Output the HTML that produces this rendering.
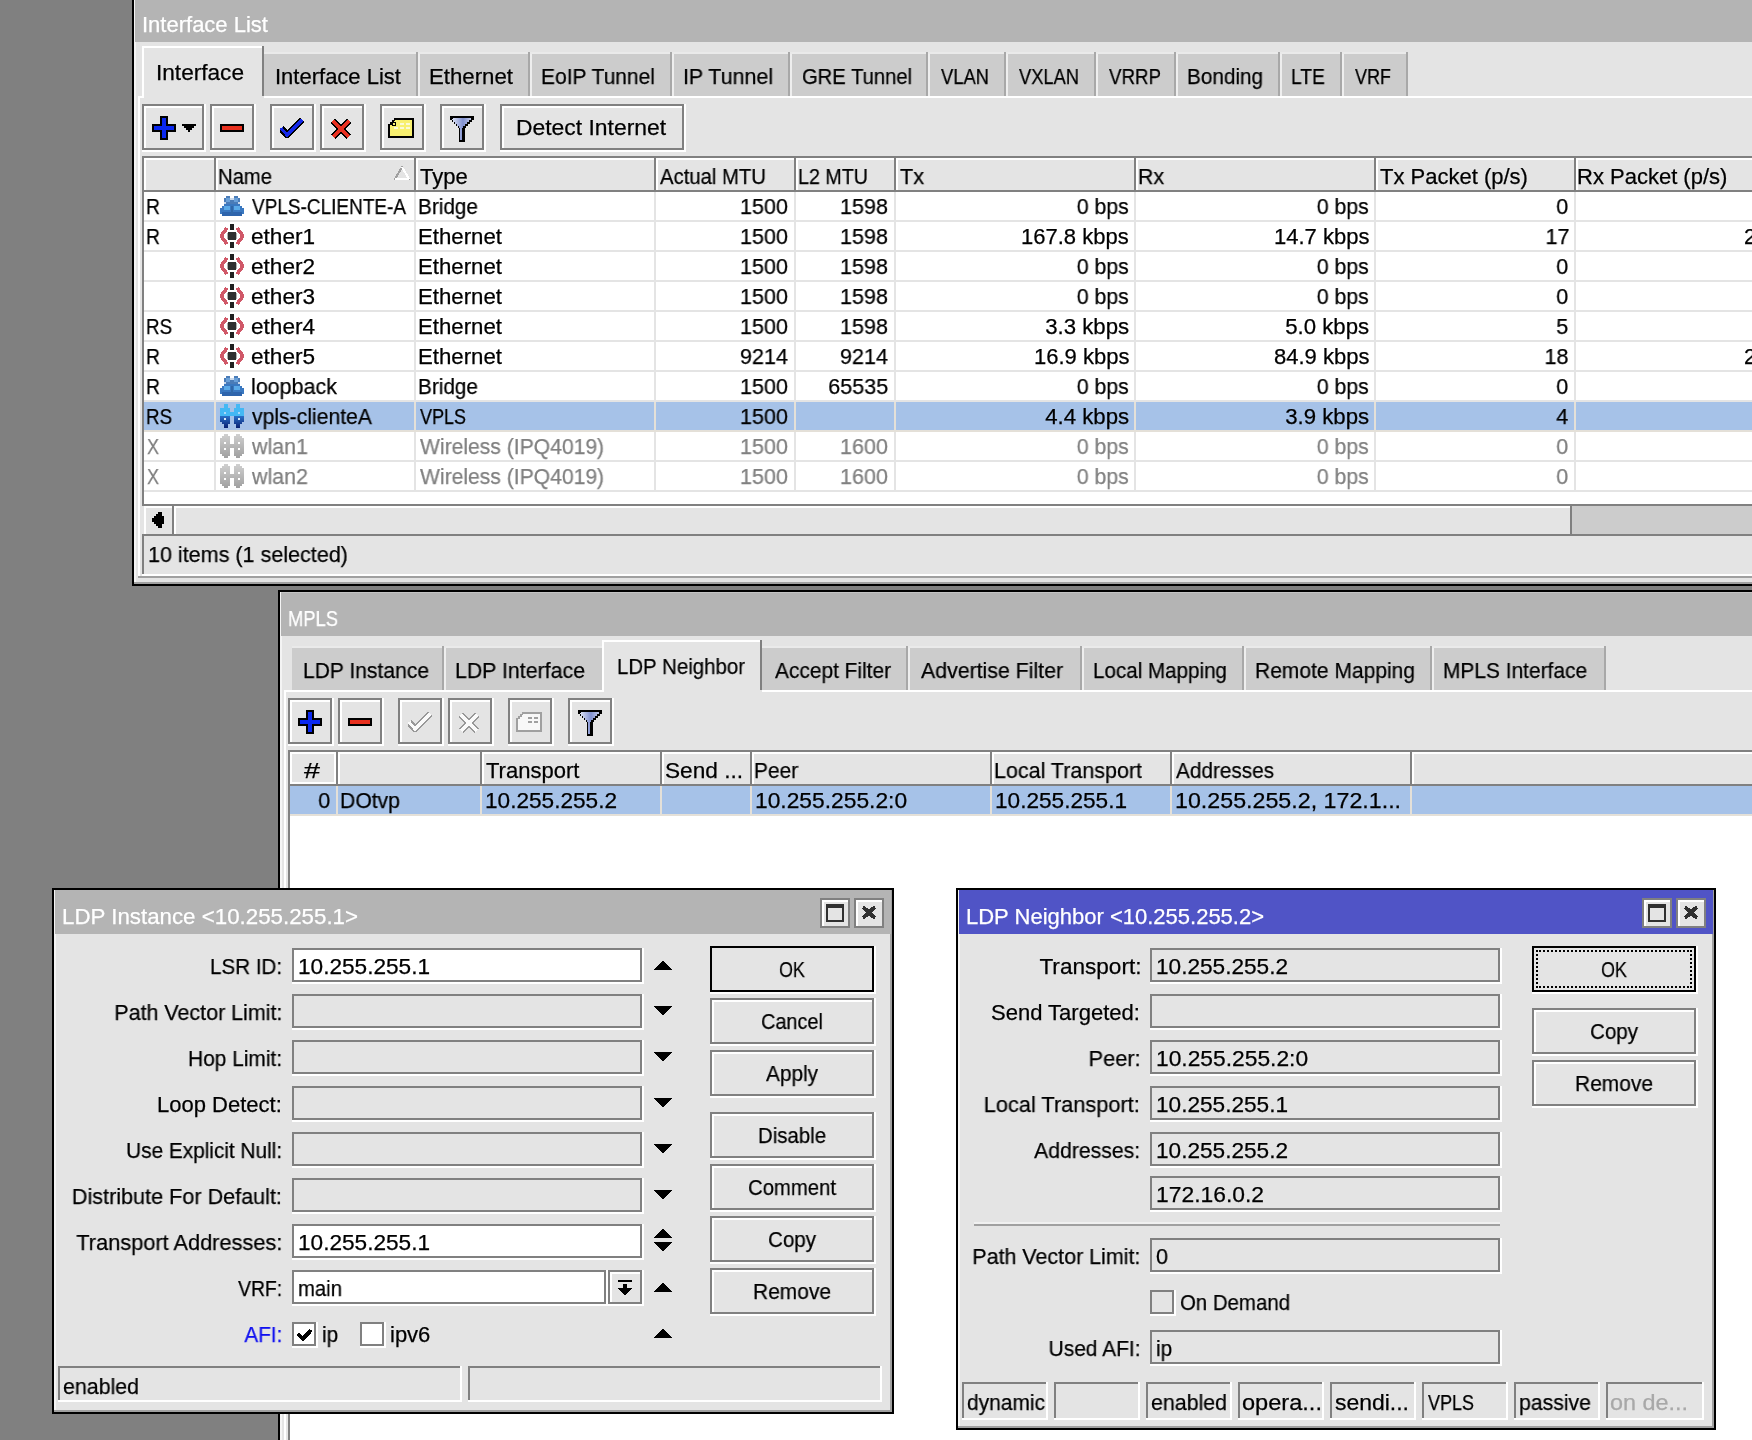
<!DOCTYPE html><html><head><meta charset="utf-8"><style>html,body{margin:0;padding:0;}body{width:1752px;height:1440px;overflow:hidden;position:relative;background:#808080;font-family:"Liberation Sans",sans-serif;font-size:22px;}div,span,svg{position:absolute;box-sizing:content-box;}.t{white-space:nowrap;line-height:24px;font-size:22px;will-change:transform;-webkit-text-stroke:0.25px currentColor;}</style></head><body>
<div style="left:132px;top:-10px;width:1630px;height:596px;background:#000;"></div>
<div style="left:134px;top:-10px;width:1752px;height:594px;background:#f4f4f4;"></div>
<div style="left:134px;top:582px;width:1752px;height:2px;background:#a0a0a0;"></div>
<div style="left:136px;top:-10px;width:1752px;height:592px;background:#e4e4e4;"></div>
<div style="left:135px;top:0px;width:1752px;height:42px;background:#b4b4b4;"></div>
<span class="t" style="left:142.0px;top:13px;color:#fff;transform-origin:0 0;">Interface List</span>
<div style="left:138px;top:96px;width:2px;height:482px;background:#fff;"></div>
<div style="left:138px;top:576px;width:1752px;height:2px;background:#a0a0a0;"></div>
<div style="left:140px;top:96px;width:1752px;height:2px;background:#fff;"></div>
<div style="left:142px;top:46px;width:122px;height:52px;background:#e4e4e4;"></div>
<div style="left:142px;top:46px;width:120px;height:2px;background:#fff;"></div>
<div style="left:142px;top:46px;width:2px;height:52px;background:#fff;"></div>
<div style="left:262px;top:46px;width:2px;height:50px;background:#808080;"></div>
<span class="t" style="left:155.9px;top:61px;color:#000;transform:scaleX(1.028);transform-origin:0 0;">Interface</span>
<div style="left:264px;top:52px;width:154px;height:2px;background:#eaeaea;"></div>
<div style="left:264px;top:54px;width:154px;height:42px;background:#cccccc;"></div>
<div style="left:416px;top:52px;width:2px;height:44px;background:#a8a8a8;"></div>
<span class="t" style="left:274.5px;top:65px;color:#000;transform-origin:0 0;">Interface List</span>
<div style="left:418px;top:52px;width:112px;height:2px;background:#eaeaea;"></div>
<div style="left:418px;top:54px;width:112px;height:42px;background:#cccccc;"></div>
<div style="left:528px;top:52px;width:2px;height:44px;background:#a8a8a8;"></div>
<div style="left:418px;top:54px;width:2px;height:42px;background:#eeeeee;"></div>
<span class="t" style="left:428.5px;top:65px;color:#000;transform:scaleX(1.010);transform-origin:0 0;">Ethernet</span>
<div style="left:530px;top:52px;width:142px;height:2px;background:#eaeaea;"></div>
<div style="left:530px;top:54px;width:142px;height:42px;background:#cccccc;"></div>
<div style="left:670px;top:52px;width:2px;height:44px;background:#a8a8a8;"></div>
<div style="left:530px;top:54px;width:2px;height:42px;background:#eeeeee;"></div>
<span class="t" style="left:540.6px;top:65px;color:#000;transform:scaleX(0.954);transform-origin:0 0;">EoIP Tunnel</span>
<div style="left:672px;top:52px;width:118px;height:2px;background:#eaeaea;"></div>
<div style="left:672px;top:54px;width:118px;height:42px;background:#cccccc;"></div>
<div style="left:788px;top:52px;width:2px;height:44px;background:#a8a8a8;"></div>
<div style="left:672px;top:54px;width:2px;height:42px;background:#eeeeee;"></div>
<span class="t" style="left:682.6px;top:65px;color:#000;transform:scaleX(0.972);transform-origin:0 0;">IP Tunnel</span>
<div style="left:790px;top:52px;width:138px;height:2px;background:#eaeaea;"></div>
<div style="left:790px;top:54px;width:138px;height:42px;background:#cccccc;"></div>
<div style="left:926px;top:52px;width:2px;height:44px;background:#a8a8a8;"></div>
<div style="left:790px;top:54px;width:2px;height:42px;background:#eeeeee;"></div>
<span class="t" style="left:801.6px;top:65px;color:#000;transform:scaleX(0.918);transform-origin:0 0;">GRE Tunnel</span>
<div style="left:928px;top:52px;width:78px;height:2px;background:#eaeaea;"></div>
<div style="left:928px;top:54px;width:78px;height:42px;background:#cccccc;"></div>
<div style="left:1004px;top:52px;width:2px;height:44px;background:#a8a8a8;"></div>
<div style="left:928px;top:54px;width:2px;height:42px;background:#eeeeee;"></div>
<span class="t" style="left:940.5px;top:65px;color:#000;transform:scaleX(0.835);transform-origin:0 0;">VLAN</span>
<div style="left:1006px;top:52px;width:90px;height:2px;background:#eaeaea;"></div>
<div style="left:1006px;top:54px;width:90px;height:42px;background:#cccccc;"></div>
<div style="left:1094px;top:52px;width:2px;height:44px;background:#a8a8a8;"></div>
<div style="left:1006px;top:54px;width:2px;height:42px;background:#eeeeee;"></div>
<span class="t" style="left:1018.5px;top:65px;color:#000;transform:scaleX(0.832);transform-origin:0 0;">VXLAN</span>
<div style="left:1096px;top:52px;width:80px;height:2px;background:#eaeaea;"></div>
<div style="left:1096px;top:54px;width:80px;height:42px;background:#cccccc;"></div>
<div style="left:1174px;top:52px;width:2px;height:44px;background:#a8a8a8;"></div>
<div style="left:1096px;top:54px;width:2px;height:42px;background:#eeeeee;"></div>
<span class="t" style="left:1108.5px;top:65px;color:#000;transform:scaleX(0.851);transform-origin:0 0;">VRRP</span>
<div style="left:1176px;top:52px;width:104px;height:2px;background:#eaeaea;"></div>
<div style="left:1176px;top:54px;width:104px;height:42px;background:#cccccc;"></div>
<div style="left:1278px;top:52px;width:2px;height:44px;background:#a8a8a8;"></div>
<div style="left:1176px;top:54px;width:2px;height:42px;background:#eeeeee;"></div>
<span class="t" style="left:1186.6px;top:65px;color:#000;transform:scaleX(0.941);transform-origin:0 0;">Bonding</span>
<div style="left:1280px;top:52px;width:62px;height:2px;background:#eaeaea;"></div>
<div style="left:1280px;top:54px;width:62px;height:42px;background:#cccccc;"></div>
<div style="left:1340px;top:52px;width:2px;height:44px;background:#a8a8a8;"></div>
<div style="left:1280px;top:54px;width:2px;height:42px;background:#eeeeee;"></div>
<span class="t" style="left:1290.7px;top:65px;color:#000;transform:scaleX(0.878);transform-origin:0 0;">LTE</span>
<div style="left:1342px;top:52px;width:66px;height:2px;background:#eaeaea;"></div>
<div style="left:1342px;top:54px;width:66px;height:42px;background:#cccccc;"></div>
<div style="left:1406px;top:52px;width:2px;height:44px;background:#a8a8a8;"></div>
<div style="left:1342px;top:54px;width:2px;height:42px;background:#eeeeee;"></div>
<span class="t" style="left:1354.5px;top:65px;color:#000;transform:scaleX(0.818);transform-origin:0 0;">VRF</span>
<div style="left:142px;top:104px;width:58px;height:42px;border:2px solid #808080;background:#e4e4e4;box-shadow:0 2px 0 0 #fff,2px 0 0 0 #fff,2px 2px 0 0 #fff, inset 2px 2px 0 0 #fff;"></div>
<svg style="position:absolute;left:152px;top:116px" width="24" height="24" viewBox="0 0 24 24" shape-rendering="crispEdges"><path d="M8 0h8v8h8v8h-8v8h-8v-8h-8v-8h8z" fill="#000"/><path d="M10 2h4v8h8v4h-8v8h-4v-8h-8v-4h8z" fill="#0a28f0"/></svg>
<svg style="position:absolute;left:182px;top:124px" width="14" height="8" viewBox="0 0 14 8" shape-rendering="crispEdges"><path d="M0 0h14v2h-2v2h-2v2h-2v2h-2v-2h-2v-2h-2v-2h-2z" fill="#000"/></svg>
<div style="left:210px;top:104px;width:40px;height:42px;border:2px solid #808080;background:#e4e4e4;box-shadow:0 2px 0 0 #fff,2px 0 0 0 #fff,2px 2px 0 0 #fff, inset 2px 2px 0 0 #fff;"></div>
<svg style="position:absolute;left:220px;top:124px" width="24" height="8" viewBox="0 0 24 8" shape-rendering="crispEdges"><rect width="24" height="8" fill="#000"/><rect x="2" y="2" width="20" height="4" fill="#e8301e"/></svg>
<div style="left:270px;top:104px;width:40px;height:42px;border:2px solid #808080;background:#e4e4e4;box-shadow:0 2px 0 0 #fff,2px 0 0 0 #fff,2px 2px 0 0 #fff, inset 2px 2px 0 0 #fff;"></div>
<svg style="position:absolute;left:280px;top:118px" width="24" height="20" viewBox="0 0 24 20" shape-rendering="crispEdges"><path d="M1 10 L7 17 L22 2" fill="none" stroke="#000" stroke-width="7" stroke-linejoin="miter"/><path d="M1 10 L7 17 L22 2" fill="none" stroke="#1428e8" stroke-width="3" stroke-linejoin="miter"/></svg>
<div style="left:320px;top:104px;width:40px;height:42px;border:2px solid #808080;background:#e4e4e4;box-shadow:0 2px 0 0 #fff,2px 0 0 0 #fff,2px 2px 0 0 #fff, inset 2px 2px 0 0 #fff;"></div>
<svg style="position:absolute;left:330px;top:118px" width="22" height="22" viewBox="0 0 22 22" shape-rendering="crispEdges"><path d="M3 3L19 19M19 3L3 19" fill="none" stroke="#000" stroke-width="7"/><path d="M3 3L19 19M19 3L3 19" fill="none" stroke="#e83020" stroke-width="3"/></svg>
<div style="left:380px;top:104px;width:40px;height:42px;border:2px solid #808080;background:#e4e4e4;box-shadow:0 2px 0 0 #fff,2px 0 0 0 #fff,2px 2px 0 0 #fff, inset 2px 2px 0 0 #fff;"></div>
<svg style="position:absolute;left:388px;top:118px" width="26" height="20" viewBox="0 0 26 20" shape-rendering="crispEdges"><path d="M6 0h20v20h-26v-14h2v-2h2v-2h2z" fill="#000"/><path d="M7 2h17v16h-22v-11h2v-2h2v-2h1z" fill="#f8f070"/><rect x="4" y="4" width="4" height="4" fill="#000"/><rect x="5" y="5" width="2" height="2" fill="#f8f070"/><path d="M12 6h4M18 6h4M6 10h4M12 10h4M18 10h4" stroke="#fafad8" stroke-width="2"/></svg>
<div style="left:440px;top:104px;width:40px;height:42px;border:2px solid #808080;background:#e4e4e4;box-shadow:0 2px 0 0 #fff,2px 0 0 0 #fff,2px 2px 0 0 #fff, inset 2px 2px 0 0 #fff;"></div>
<svg style="position:absolute;left:450px;top:116px" width="24" height="26" viewBox="0 0 24 26" shape-rendering="crispEdges"><defs><linearGradient id="flg" x1="0" y1="0" x2="1" y2="0"><stop offset="0" stop-color="#e8ecf8"/><stop offset=".6" stop-color="#8090d0"/><stop offset="1" stop-color="#c0c8e8"/></linearGradient></defs><path d="M0 0h24v4h-2v2h-2v2h-2v2h-2v2h-1v14h-6v-14h-1v-2h-2v-2h-2v-2h-2v-2h-2z" fill="#000"/><path d="M3 2h18v2h-2v2h-2v2h-2v2h-2v2h-1v12h-2v-12h-1v-2h-2v-2h-2v-2h-2v-2h-2z" fill="url(#flg)"/></svg>
<div style="left:500px;top:104px;width:180px;height:42px;border:2px solid #808080;background:#e4e4e4;box-shadow:0 2px 0 0 #fff,2px 0 0 0 #fff,2px 2px 0 0 #fff, inset 2px 2px 0 0 #fff;"></div>
<span class="t" style="left:516.1px;top:116px;color:#000;transform:scaleX(1.040);transform-origin:0 0;">Detect Internet</span>
<div style="left:142px;top:156px;width:1752px;height:350px;background:#808080;"></div>
<div style="left:144px;top:158px;width:1752px;height:346px;background:#fff;"></div>
<div style="left:144px;top:158px;width:1752px;height:32px;background:#e4e4e4;"></div>
<div style="left:144px;top:190px;width:1752px;height:2px;background:#808080;"></div>
<div style="left:144px;top:158px;width:2000px;height:2px;background:#fff;"></div>
<div style="left:144px;top:158px;width:2px;height:32px;background:#fff;"></div>
<div style="left:216px;top:158px;width:2000px;height:2px;background:#fff;"></div>
<div style="left:216px;top:158px;width:2px;height:32px;background:#fff;"></div>
<div style="left:416px;top:158px;width:2000px;height:2px;background:#fff;"></div>
<div style="left:416px;top:158px;width:2px;height:32px;background:#fff;"></div>
<div style="left:656px;top:158px;width:2000px;height:2px;background:#fff;"></div>
<div style="left:656px;top:158px;width:2px;height:32px;background:#fff;"></div>
<div style="left:796px;top:158px;width:2000px;height:2px;background:#fff;"></div>
<div style="left:796px;top:158px;width:2px;height:32px;background:#fff;"></div>
<div style="left:896px;top:158px;width:2000px;height:2px;background:#fff;"></div>
<div style="left:896px;top:158px;width:2px;height:32px;background:#fff;"></div>
<div style="left:1136px;top:158px;width:2000px;height:2px;background:#fff;"></div>
<div style="left:1136px;top:158px;width:2px;height:32px;background:#fff;"></div>
<div style="left:1376px;top:158px;width:2000px;height:2px;background:#fff;"></div>
<div style="left:1376px;top:158px;width:2px;height:32px;background:#fff;"></div>
<div style="left:1576px;top:158px;width:2000px;height:2px;background:#fff;"></div>
<div style="left:1576px;top:158px;width:2px;height:32px;background:#fff;"></div>
<div style="left:214px;top:158px;width:2px;height:32px;background:#808080;"></div>
<div style="left:414px;top:158px;width:2px;height:32px;background:#808080;"></div>
<div style="left:654px;top:158px;width:2px;height:32px;background:#808080;"></div>
<div style="left:794px;top:158px;width:2px;height:32px;background:#808080;"></div>
<div style="left:894px;top:158px;width:2px;height:32px;background:#808080;"></div>
<div style="left:1134px;top:158px;width:2px;height:32px;background:#808080;"></div>
<div style="left:1374px;top:158px;width:2px;height:32px;background:#808080;"></div>
<div style="left:1574px;top:158px;width:2px;height:32px;background:#808080;"></div>
<span class="t" style="left:218.2px;top:165px;color:#000;transform:scaleX(0.920);transform-origin:0 0;">Name</span>
<span class="t" style="left:420.0px;top:165px;color:#000;transform-origin:0 0;">Type</span>
<span class="t" style="left:660.0px;top:165px;color:#000;transform:scaleX(0.922);transform-origin:0 0;">Actual MTU</span>
<span class="t" style="left:798.2px;top:165px;color:#000;transform:scaleX(0.895);transform-origin:0 0;">L2 MTU</span>
<span class="t" style="left:900.0px;top:165px;color:#000;transform:scaleX(0.982);transform-origin:0 0;">Tx</span>
<span class="t" style="left:1138.1px;top:165px;color:#000;transform:scaleX(0.967);transform-origin:0 0;">Rx</span>
<span class="t" style="left:1380.0px;top:165px;color:#000;transform-origin:0 0;">Tx Packet (p/s)</span>
<span class="t" style="left:1577.0px;top:165px;color:#000;transform-origin:0 0;">Rx Packet (p/s)</span>
<svg style="position:absolute;left:394px;top:166px" width="16" height="14" viewBox="0 0 16 14" shape-rendering="crispEdges"><path d="M8 1L15 13H1z" fill="none" stroke="#a0a0a0" stroke-width="2"/><path d="M1 13H15M8 1L15 13" stroke="#fff" stroke-width="2"/></svg>
<div style="left:144px;top:220px;width:1752px;height:2px;background:#e4e4e4;"></div>
<div style="left:214px;top:192px;width:2px;height:30px;background:#e4e4e4;"></div>
<div style="left:414px;top:192px;width:2px;height:30px;background:#e4e4e4;"></div>
<div style="left:654px;top:192px;width:2px;height:30px;background:#e4e4e4;"></div>
<div style="left:794px;top:192px;width:2px;height:30px;background:#e4e4e4;"></div>
<div style="left:894px;top:192px;width:2px;height:30px;background:#e4e4e4;"></div>
<div style="left:1134px;top:192px;width:2px;height:30px;background:#e4e4e4;"></div>
<div style="left:1374px;top:192px;width:2px;height:30px;background:#e4e4e4;"></div>
<div style="left:1574px;top:192px;width:2px;height:30px;background:#e4e4e4;"></div>
<span class="t" style="left:146.2px;top:195px;color:#000;transform:scaleX(0.881);transform-origin:0 0;">R</span>
<svg style="position:absolute;left:220px;top:196px" width="24" height="20" viewBox="0 0 24 20" shape-rendering="crispEdges"><path d="M4 2h2v-2h4v2h4v-2h4v2h2v6h-16z" fill="#4a7cb8"/><rect x="6" y="2" width="4" height="4" fill="#6aa0d8"/><rect x="14" y="2" width="4" height="4" fill="#6aa0d8"/><rect x="10" y="2" width="4" height="2" fill="#c8d8ec"/><rect x="4" y="6" width="2" height="2" fill="#c8d8ec"/><rect x="18" y="6" width="2" height="2" fill="#c8d8ec"/><path d="M2 10h2v-2h16v2h2v2h2v6h-2v2h-20v-2h-2v-6h2z" fill="#3a78c0"/><rect x="4" y="10" width="6" height="4" fill="#5aaae8"/><rect x="14" y="10" width="6" height="4" fill="#5aaae8"/><rect x="2" y="16" width="20" height="4" fill="#2e64ac"/><rect x="11" y="10" width="2" height="8" fill="#3068a8"/></svg>
<span class="t" style="left:252.0px;top:195px;color:#000;transform:scaleX(0.863);transform-origin:0 0;">VPLS-CLIENTE-A</span>
<span class="t" style="left:418.1px;top:195px;color:#000;transform:scaleX(0.943);transform-origin:0 0;">Bridge</span>
<span class="t" style="right:964.1px;top:195px;color:#000;transform:scaleX(0.981);transform-origin:100% 0;">1500</span>
<span class="t" style="right:864.1px;top:195px;color:#000;transform:scaleX(0.981);transform-origin:100% 0;">1598</span>
<span class="t" style="right:623.2px;top:195px;color:#000;transform:scaleX(0.966);transform-origin:100% 0;">0 bps</span>
<span class="t" style="right:383.2px;top:195px;color:#000;transform:scaleX(0.966);transform-origin:100% 0;">0 bps</span>
<span class="t" style="right:183.8px;top:195px;color:#000;transform:scaleX(0.981);transform-origin:100% 0;">0</span>
<div style="left:144px;top:250px;width:1752px;height:2px;background:#e4e4e4;"></div>
<div style="left:214px;top:222px;width:2px;height:30px;background:#e4e4e4;"></div>
<div style="left:414px;top:222px;width:2px;height:30px;background:#e4e4e4;"></div>
<div style="left:654px;top:222px;width:2px;height:30px;background:#e4e4e4;"></div>
<div style="left:794px;top:222px;width:2px;height:30px;background:#e4e4e4;"></div>
<div style="left:894px;top:222px;width:2px;height:30px;background:#e4e4e4;"></div>
<div style="left:1134px;top:222px;width:2px;height:30px;background:#e4e4e4;"></div>
<div style="left:1374px;top:222px;width:2px;height:30px;background:#e4e4e4;"></div>
<div style="left:1574px;top:222px;width:2px;height:30px;background:#e4e4e4;"></div>
<span class="t" style="left:146.2px;top:225px;color:#000;transform:scaleX(0.881);transform-origin:0 0;">R</span>
<svg style="position:absolute;left:220px;top:224px" width="24" height="24" viewBox="0 0 24 24" shape-rendering="crispEdges"><rect x="10" y="0" width="4" height="6" fill="#202020"/><rect x="10" y="18" width="4" height="6" fill="#202020"/><rect x="8" y="8" width="8" height="8" fill="#303030"/><path d="M7 4l-6 8 6 8" fill="none" stroke="#d05868" stroke-width="3.5"/><path d="M17 4l6 8-6 8" fill="none" stroke="#d05868" stroke-width="3.5"/><rect x="7" y="9" width="1" height="6" fill="#b0b0b0"/><rect x="16" y="9" width="1" height="6" fill="#b0b0b0"/></svg>
<span class="t" style="left:251.0px;top:225px;color:#000;transform:scaleX(1.026);transform-origin:0 0;">ether1</span>
<span class="t" style="left:418.0px;top:225px;color:#000;transform:scaleX(1.010);transform-origin:0 0;">Ethernet</span>
<span class="t" style="right:964.1px;top:225px;color:#000;transform:scaleX(0.981);transform-origin:100% 0;">1500</span>
<span class="t" style="right:864.1px;top:225px;color:#000;transform:scaleX(0.981);transform-origin:100% 0;">1598</span>
<span class="t" style="right:623.4px;top:225px;color:#000;transform-origin:100% 0;">167.8 kbps</span>
<span class="t" style="right:382.6px;top:225px;color:#000;transform-origin:100% 0;">14.7 kbps</span>
<span class="t" style="right:182.6px;top:225px;color:#000;transform:scaleX(0.981);transform-origin:100% 0;">17</span>
<span class="t" style="left:1744.0px;top:225px;color:#000;transform:scaleX(0.981);transform-origin:0 0;">2</span>
<div style="left:144px;top:280px;width:1752px;height:2px;background:#e4e4e4;"></div>
<div style="left:214px;top:252px;width:2px;height:30px;background:#e4e4e4;"></div>
<div style="left:414px;top:252px;width:2px;height:30px;background:#e4e4e4;"></div>
<div style="left:654px;top:252px;width:2px;height:30px;background:#e4e4e4;"></div>
<div style="left:794px;top:252px;width:2px;height:30px;background:#e4e4e4;"></div>
<div style="left:894px;top:252px;width:2px;height:30px;background:#e4e4e4;"></div>
<div style="left:1134px;top:252px;width:2px;height:30px;background:#e4e4e4;"></div>
<div style="left:1374px;top:252px;width:2px;height:30px;background:#e4e4e4;"></div>
<div style="left:1574px;top:252px;width:2px;height:30px;background:#e4e4e4;"></div>
<span class="t" style="left:148.0px;top:255px;color:#000;transform-origin:0 0;"></span>
<svg style="position:absolute;left:220px;top:254px" width="24" height="24" viewBox="0 0 24 24" shape-rendering="crispEdges"><rect x="10" y="0" width="4" height="6" fill="#202020"/><rect x="10" y="18" width="4" height="6" fill="#202020"/><rect x="8" y="8" width="8" height="8" fill="#303030"/><path d="M7 4l-6 8 6 8" fill="none" stroke="#d05868" stroke-width="3.5"/><path d="M17 4l6 8-6 8" fill="none" stroke="#d05868" stroke-width="3.5"/><rect x="7" y="9" width="1" height="6" fill="#b0b0b0"/><rect x="16" y="9" width="1" height="6" fill="#b0b0b0"/></svg>
<span class="t" style="left:251.0px;top:255px;color:#000;transform:scaleX(1.026);transform-origin:0 0;">ether2</span>
<span class="t" style="left:418.0px;top:255px;color:#000;transform:scaleX(1.010);transform-origin:0 0;">Ethernet</span>
<span class="t" style="right:964.1px;top:255px;color:#000;transform:scaleX(0.981);transform-origin:100% 0;">1500</span>
<span class="t" style="right:864.1px;top:255px;color:#000;transform:scaleX(0.981);transform-origin:100% 0;">1598</span>
<span class="t" style="right:623.2px;top:255px;color:#000;transform:scaleX(0.966);transform-origin:100% 0;">0 bps</span>
<span class="t" style="right:383.2px;top:255px;color:#000;transform:scaleX(0.966);transform-origin:100% 0;">0 bps</span>
<span class="t" style="right:183.8px;top:255px;color:#000;transform:scaleX(0.981);transform-origin:100% 0;">0</span>
<div style="left:144px;top:310px;width:1752px;height:2px;background:#e4e4e4;"></div>
<div style="left:214px;top:282px;width:2px;height:30px;background:#e4e4e4;"></div>
<div style="left:414px;top:282px;width:2px;height:30px;background:#e4e4e4;"></div>
<div style="left:654px;top:282px;width:2px;height:30px;background:#e4e4e4;"></div>
<div style="left:794px;top:282px;width:2px;height:30px;background:#e4e4e4;"></div>
<div style="left:894px;top:282px;width:2px;height:30px;background:#e4e4e4;"></div>
<div style="left:1134px;top:282px;width:2px;height:30px;background:#e4e4e4;"></div>
<div style="left:1374px;top:282px;width:2px;height:30px;background:#e4e4e4;"></div>
<div style="left:1574px;top:282px;width:2px;height:30px;background:#e4e4e4;"></div>
<span class="t" style="left:148.0px;top:285px;color:#000;transform-origin:0 0;"></span>
<svg style="position:absolute;left:220px;top:284px" width="24" height="24" viewBox="0 0 24 24" shape-rendering="crispEdges"><rect x="10" y="0" width="4" height="6" fill="#202020"/><rect x="10" y="18" width="4" height="6" fill="#202020"/><rect x="8" y="8" width="8" height="8" fill="#303030"/><path d="M7 4l-6 8 6 8" fill="none" stroke="#d05868" stroke-width="3.5"/><path d="M17 4l6 8-6 8" fill="none" stroke="#d05868" stroke-width="3.5"/><rect x="7" y="9" width="1" height="6" fill="#b0b0b0"/><rect x="16" y="9" width="1" height="6" fill="#b0b0b0"/></svg>
<span class="t" style="left:251.0px;top:285px;color:#000;transform:scaleX(1.026);transform-origin:0 0;">ether3</span>
<span class="t" style="left:418.0px;top:285px;color:#000;transform:scaleX(1.010);transform-origin:0 0;">Ethernet</span>
<span class="t" style="right:964.1px;top:285px;color:#000;transform:scaleX(0.981);transform-origin:100% 0;">1500</span>
<span class="t" style="right:864.1px;top:285px;color:#000;transform:scaleX(0.981);transform-origin:100% 0;">1598</span>
<span class="t" style="right:623.2px;top:285px;color:#000;transform:scaleX(0.966);transform-origin:100% 0;">0 bps</span>
<span class="t" style="right:383.2px;top:285px;color:#000;transform:scaleX(0.966);transform-origin:100% 0;">0 bps</span>
<span class="t" style="right:183.8px;top:285px;color:#000;transform:scaleX(0.981);transform-origin:100% 0;">0</span>
<div style="left:144px;top:340px;width:1752px;height:2px;background:#e4e4e4;"></div>
<div style="left:214px;top:312px;width:2px;height:30px;background:#e4e4e4;"></div>
<div style="left:414px;top:312px;width:2px;height:30px;background:#e4e4e4;"></div>
<div style="left:654px;top:312px;width:2px;height:30px;background:#e4e4e4;"></div>
<div style="left:794px;top:312px;width:2px;height:30px;background:#e4e4e4;"></div>
<div style="left:894px;top:312px;width:2px;height:30px;background:#e4e4e4;"></div>
<div style="left:1134px;top:312px;width:2px;height:30px;background:#e4e4e4;"></div>
<div style="left:1374px;top:312px;width:2px;height:30px;background:#e4e4e4;"></div>
<div style="left:1574px;top:312px;width:2px;height:30px;background:#e4e4e4;"></div>
<span class="t" style="left:146.3px;top:315px;color:#000;transform:scaleX(0.851);transform-origin:0 0;">RS</span>
<svg style="position:absolute;left:220px;top:314px" width="24" height="24" viewBox="0 0 24 24" shape-rendering="crispEdges"><rect x="10" y="0" width="4" height="6" fill="#202020"/><rect x="10" y="18" width="4" height="6" fill="#202020"/><rect x="8" y="8" width="8" height="8" fill="#303030"/><path d="M7 4l-6 8 6 8" fill="none" stroke="#d05868" stroke-width="3.5"/><path d="M17 4l6 8-6 8" fill="none" stroke="#d05868" stroke-width="3.5"/><rect x="7" y="9" width="1" height="6" fill="#b0b0b0"/><rect x="16" y="9" width="1" height="6" fill="#b0b0b0"/></svg>
<span class="t" style="left:251.0px;top:315px;color:#000;transform:scaleX(1.026);transform-origin:0 0;">ether4</span>
<span class="t" style="left:418.0px;top:315px;color:#000;transform:scaleX(1.010);transform-origin:0 0;">Ethernet</span>
<span class="t" style="right:964.1px;top:315px;color:#000;transform:scaleX(0.981);transform-origin:100% 0;">1500</span>
<span class="t" style="right:864.1px;top:315px;color:#000;transform:scaleX(0.981);transform-origin:100% 0;">1598</span>
<span class="t" style="right:622.8px;top:315px;color:#000;transform:scaleX(1.010);transform-origin:100% 0;">3.3 kbps</span>
<span class="t" style="right:382.8px;top:315px;color:#000;transform:scaleX(1.010);transform-origin:100% 0;">5.0 kbps</span>
<span class="t" style="right:183.8px;top:315px;color:#000;transform:scaleX(0.981);transform-origin:100% 0;">5</span>
<div style="left:144px;top:370px;width:1752px;height:2px;background:#e4e4e4;"></div>
<div style="left:214px;top:342px;width:2px;height:30px;background:#e4e4e4;"></div>
<div style="left:414px;top:342px;width:2px;height:30px;background:#e4e4e4;"></div>
<div style="left:654px;top:342px;width:2px;height:30px;background:#e4e4e4;"></div>
<div style="left:794px;top:342px;width:2px;height:30px;background:#e4e4e4;"></div>
<div style="left:894px;top:342px;width:2px;height:30px;background:#e4e4e4;"></div>
<div style="left:1134px;top:342px;width:2px;height:30px;background:#e4e4e4;"></div>
<div style="left:1374px;top:342px;width:2px;height:30px;background:#e4e4e4;"></div>
<div style="left:1574px;top:342px;width:2px;height:30px;background:#e4e4e4;"></div>
<span class="t" style="left:146.2px;top:345px;color:#000;transform:scaleX(0.881);transform-origin:0 0;">R</span>
<svg style="position:absolute;left:220px;top:344px" width="24" height="24" viewBox="0 0 24 24" shape-rendering="crispEdges"><rect x="10" y="0" width="4" height="6" fill="#202020"/><rect x="10" y="18" width="4" height="6" fill="#202020"/><rect x="8" y="8" width="8" height="8" fill="#303030"/><path d="M7 4l-6 8 6 8" fill="none" stroke="#d05868" stroke-width="3.5"/><path d="M17 4l6 8-6 8" fill="none" stroke="#d05868" stroke-width="3.5"/><rect x="7" y="9" width="1" height="6" fill="#b0b0b0"/><rect x="16" y="9" width="1" height="6" fill="#b0b0b0"/></svg>
<span class="t" style="left:251.0px;top:345px;color:#000;transform:scaleX(1.026);transform-origin:0 0;">ether5</span>
<span class="t" style="left:418.0px;top:345px;color:#000;transform:scaleX(1.010);transform-origin:0 0;">Ethernet</span>
<span class="t" style="right:964.1px;top:345px;color:#000;transform:scaleX(0.981);transform-origin:100% 0;">9214</span>
<span class="t" style="right:864.1px;top:345px;color:#000;transform:scaleX(0.981);transform-origin:100% 0;">9214</span>
<span class="t" style="right:622.6px;top:345px;color:#000;transform-origin:100% 0;">16.9 kbps</span>
<span class="t" style="right:382.6px;top:345px;color:#000;transform-origin:100% 0;">84.9 kbps</span>
<span class="t" style="right:183.5px;top:345px;color:#000;transform:scaleX(0.981);transform-origin:100% 0;">18</span>
<span class="t" style="left:1744.0px;top:345px;color:#000;transform:scaleX(0.981);transform-origin:0 0;">2</span>
<div style="left:144px;top:400px;width:1752px;height:2px;background:#e4e4e4;"></div>
<div style="left:214px;top:372px;width:2px;height:30px;background:#e4e4e4;"></div>
<div style="left:414px;top:372px;width:2px;height:30px;background:#e4e4e4;"></div>
<div style="left:654px;top:372px;width:2px;height:30px;background:#e4e4e4;"></div>
<div style="left:794px;top:372px;width:2px;height:30px;background:#e4e4e4;"></div>
<div style="left:894px;top:372px;width:2px;height:30px;background:#e4e4e4;"></div>
<div style="left:1134px;top:372px;width:2px;height:30px;background:#e4e4e4;"></div>
<div style="left:1374px;top:372px;width:2px;height:30px;background:#e4e4e4;"></div>
<div style="left:1574px;top:372px;width:2px;height:30px;background:#e4e4e4;"></div>
<span class="t" style="left:146.2px;top:375px;color:#000;transform:scaleX(0.881);transform-origin:0 0;">R</span>
<svg style="position:absolute;left:220px;top:376px" width="24" height="20" viewBox="0 0 24 20" shape-rendering="crispEdges"><path d="M4 2h2v-2h4v2h4v-2h4v2h2v6h-16z" fill="#4a7cb8"/><rect x="6" y="2" width="4" height="4" fill="#6aa0d8"/><rect x="14" y="2" width="4" height="4" fill="#6aa0d8"/><rect x="10" y="2" width="4" height="2" fill="#c8d8ec"/><rect x="4" y="6" width="2" height="2" fill="#c8d8ec"/><rect x="18" y="6" width="2" height="2" fill="#c8d8ec"/><path d="M2 10h2v-2h16v2h2v2h2v6h-2v2h-20v-2h-2v-6h2z" fill="#3a78c0"/><rect x="4" y="10" width="6" height="4" fill="#5aaae8"/><rect x="14" y="10" width="6" height="4" fill="#5aaae8"/><rect x="2" y="16" width="20" height="4" fill="#2e64ac"/><rect x="11" y="10" width="2" height="8" fill="#3068a8"/></svg>
<span class="t" style="left:251.0px;top:375px;color:#000;transform:scaleX(0.977);transform-origin:0 0;">loopback</span>
<span class="t" style="left:418.1px;top:375px;color:#000;transform:scaleX(0.943);transform-origin:0 0;">Bridge</span>
<span class="t" style="right:964.1px;top:375px;color:#000;transform:scaleX(0.981);transform-origin:100% 0;">1500</span>
<span class="t" style="right:863.8px;top:375px;color:#000;transform:scaleX(0.981);transform-origin:100% 0;">65535</span>
<span class="t" style="right:623.2px;top:375px;color:#000;transform:scaleX(0.966);transform-origin:100% 0;">0 bps</span>
<span class="t" style="right:383.2px;top:375px;color:#000;transform:scaleX(0.966);transform-origin:100% 0;">0 bps</span>
<span class="t" style="right:183.8px;top:375px;color:#000;transform:scaleX(0.981);transform-origin:100% 0;">0</span>
<div style="left:144px;top:402px;width:1752px;height:28px;background:#a6c2e8;"></div>
<div style="left:144px;top:430px;width:1752px;height:2px;background:#e4e0d8;"></div>
<div style="left:214px;top:402px;width:2px;height:30px;background:#e4e0d8;"></div>
<div style="left:414px;top:402px;width:2px;height:30px;background:#e4e0d8;"></div>
<div style="left:654px;top:402px;width:2px;height:30px;background:#e4e0d8;"></div>
<div style="left:794px;top:402px;width:2px;height:30px;background:#e4e0d8;"></div>
<div style="left:894px;top:402px;width:2px;height:30px;background:#e4e0d8;"></div>
<div style="left:1134px;top:402px;width:2px;height:30px;background:#e4e0d8;"></div>
<div style="left:1374px;top:402px;width:2px;height:30px;background:#e4e0d8;"></div>
<div style="left:1574px;top:402px;width:2px;height:30px;background:#e4e0d8;"></div>
<span class="t" style="left:146.3px;top:405px;color:#000;transform:scaleX(0.851);transform-origin:0 0;">RS</span>
<svg style="position:absolute;left:220px;top:404px" width="24" height="24" viewBox="0 0 24 24" shape-rendering="crispEdges"><defs><linearGradient id="gvp" x1="0" y1="0" x2="0" y2="1"><stop offset="0" stop-color="#2a70c8"/><stop offset="1" stop-color="#0a2070"/></linearGradient></defs><path d="M0 12H24V18H22V20H20V24H16V20H14V12H10V20H8V24H4V20H2V18H0Z" fill="url(#gvp)"/><path d="M4 0H8V4H10V8H14V4H16V0H20V4H24V12H0V4H4Z" fill="#44b8f4"/><rect x="4" y="8" width="2" height="2" fill="#a8d8f8"/><rect x="18" y="8" width="2" height="2" fill="#a8d8f8"/><rect x="4" y="14" width="2" height="2" fill="#d8e8f8"/><rect x="18" y="14" width="2" height="2" fill="#d8e8f8"/></svg>
<span class="t" style="left:252.0px;top:405px;color:#000;transform:scaleX(0.962);transform-origin:0 0;">vpls-clienteA</span>
<span class="t" style="left:420.0px;top:405px;color:#000;transform:scaleX(0.818);transform-origin:0 0;">VPLS</span>
<span class="t" style="right:964.1px;top:405px;color:#000;transform:scaleX(0.981);transform-origin:100% 0;">1500</span>
<span class="t" style="right:864.0px;top:405px;color:#000;transform-origin:100% 0;"></span>
<span class="t" style="right:622.8px;top:405px;color:#000;transform:scaleX(1.010);transform-origin:100% 0;">4.4 kbps</span>
<span class="t" style="right:382.8px;top:405px;color:#000;transform:scaleX(1.010);transform-origin:100% 0;">3.9 kbps</span>
<span class="t" style="right:183.8px;top:405px;color:#000;transform:scaleX(0.981);transform-origin:100% 0;">4</span>
<div style="left:144px;top:460px;width:1752px;height:2px;background:#e4e4e4;"></div>
<div style="left:214px;top:432px;width:2px;height:30px;background:#e4e4e4;"></div>
<div style="left:414px;top:432px;width:2px;height:30px;background:#e4e4e4;"></div>
<div style="left:654px;top:432px;width:2px;height:30px;background:#e4e4e4;"></div>
<div style="left:794px;top:432px;width:2px;height:30px;background:#e4e4e4;"></div>
<div style="left:894px;top:432px;width:2px;height:30px;background:#e4e4e4;"></div>
<div style="left:1134px;top:432px;width:2px;height:30px;background:#e4e4e4;"></div>
<div style="left:1374px;top:432px;width:2px;height:30px;background:#e4e4e4;"></div>
<div style="left:1574px;top:432px;width:2px;height:30px;background:#e4e4e4;"></div>
<span class="t" style="left:147.2px;top:435px;color:#808080;transform:scaleX(0.818);transform-origin:0 0;">X</span>
<svg style="position:absolute;left:220px;top:434px" width="24" height="24" viewBox="0 0 24 24" shape-rendering="crispEdges"><defs><linearGradient id="gwl" x1="0" y1="0" x2="0" y2="1"><stop offset="0" stop-color="#d0d0d0"/><stop offset="1" stop-color="#a0a0a0"/></linearGradient></defs><path d="M4 0H8V2H10V10H14V2H16V0H20V2H22V4H24V20H22V22H20V24H16V22H14V14H10V22H8V24H4V22H2V20H0V4H2V2H4Z" fill="url(#gwl)"/><rect x="4" y="8" width="2" height="2" fill="#fff"/><rect x="18" y="8" width="2" height="2" fill="#fff"/><rect x="4" y="14" width="2" height="2" fill="#fff"/><rect x="18" y="14" width="2" height="2" fill="#fff"/></svg>
<span class="t" style="left:252.0px;top:435px;color:#808080;transform:scaleX(0.974);transform-origin:0 0;">wlan1</span>
<span class="t" style="left:420.0px;top:435px;color:#808080;transform:scaleX(0.959);transform-origin:0 0;">Wireless (IPQ4019)</span>
<span class="t" style="right:964.1px;top:435px;color:#808080;transform:scaleX(0.981);transform-origin:100% 0;">1500</span>
<span class="t" style="right:864.1px;top:435px;color:#808080;transform:scaleX(0.981);transform-origin:100% 0;">1600</span>
<span class="t" style="right:623.2px;top:435px;color:#808080;transform:scaleX(0.966);transform-origin:100% 0;">0 bps</span>
<span class="t" style="right:383.2px;top:435px;color:#808080;transform:scaleX(0.966);transform-origin:100% 0;">0 bps</span>
<span class="t" style="right:183.8px;top:435px;color:#808080;transform:scaleX(0.981);transform-origin:100% 0;">0</span>
<div style="left:144px;top:490px;width:1752px;height:2px;background:#e4e4e4;"></div>
<div style="left:214px;top:462px;width:2px;height:30px;background:#e4e4e4;"></div>
<div style="left:414px;top:462px;width:2px;height:30px;background:#e4e4e4;"></div>
<div style="left:654px;top:462px;width:2px;height:30px;background:#e4e4e4;"></div>
<div style="left:794px;top:462px;width:2px;height:30px;background:#e4e4e4;"></div>
<div style="left:894px;top:462px;width:2px;height:30px;background:#e4e4e4;"></div>
<div style="left:1134px;top:462px;width:2px;height:30px;background:#e4e4e4;"></div>
<div style="left:1374px;top:462px;width:2px;height:30px;background:#e4e4e4;"></div>
<div style="left:1574px;top:462px;width:2px;height:30px;background:#e4e4e4;"></div>
<span class="t" style="left:147.2px;top:465px;color:#808080;transform:scaleX(0.818);transform-origin:0 0;">X</span>
<svg style="position:absolute;left:220px;top:464px" width="24" height="24" viewBox="0 0 24 24" shape-rendering="crispEdges"><defs><linearGradient id="gwl" x1="0" y1="0" x2="0" y2="1"><stop offset="0" stop-color="#d0d0d0"/><stop offset="1" stop-color="#a0a0a0"/></linearGradient></defs><path d="M4 0H8V2H10V10H14V2H16V0H20V2H22V4H24V20H22V22H20V24H16V22H14V14H10V22H8V24H4V22H2V20H0V4H2V2H4Z" fill="url(#gwl)"/><rect x="4" y="8" width="2" height="2" fill="#fff"/><rect x="18" y="8" width="2" height="2" fill="#fff"/><rect x="4" y="14" width="2" height="2" fill="#fff"/><rect x="18" y="14" width="2" height="2" fill="#fff"/></svg>
<span class="t" style="left:252.0px;top:465px;color:#808080;transform:scaleX(0.974);transform-origin:0 0;">wlan2</span>
<span class="t" style="left:420.0px;top:465px;color:#808080;transform:scaleX(0.959);transform-origin:0 0;">Wireless (IPQ4019)</span>
<span class="t" style="right:964.1px;top:465px;color:#808080;transform:scaleX(0.981);transform-origin:100% 0;">1500</span>
<span class="t" style="right:864.1px;top:465px;color:#808080;transform:scaleX(0.981);transform-origin:100% 0;">1600</span>
<span class="t" style="right:623.2px;top:465px;color:#808080;transform:scaleX(0.966);transform-origin:100% 0;">0 bps</span>
<span class="t" style="right:383.2px;top:465px;color:#808080;transform:scaleX(0.966);transform-origin:100% 0;">0 bps</span>
<span class="t" style="right:183.8px;top:465px;color:#808080;transform:scaleX(0.981);transform-origin:100% 0;">0</span>
<div style="left:142px;top:504px;width:1752px;height:2px;background:#808080;"></div>
<div style="left:144px;top:506px;width:28px;height:28px;background:#e4e4e4;"></div>
<div style="left:144px;top:506px;width:28px;height:2px;background:#fff;"></div>
<div style="left:144px;top:506px;width:2px;height:28px;background:#fff;"></div>
<div style="left:172px;top:506px;width:2px;height:28px;background:#808080;"></div>
<svg style="position:absolute;left:152px;top:512px" width="12" height="16" viewBox="0 0 12 16" shape-rendering="crispEdges"><path d="M6 0h4v4h2v8h-2v4h-4v-2h-2v-2h-2v-2h-2v-4h2v-2h2v-2h2z" fill="#000"/></svg>
<div style="left:174px;top:506px;width:1396px;height:28px;background:#e4e4e4;"></div>
<div style="left:174px;top:506px;width:1396px;height:2px;background:#fff;"></div>
<div style="left:174px;top:506px;width:2px;height:28px;background:#fff;"></div>
<div style="left:1570px;top:506px;width:2px;height:28px;background:#808080;"></div>
<div style="left:1572px;top:506px;width:200px;height:28px;background:#cccccc;"></div>
<div style="left:142px;top:534px;width:1752px;height:2px;background:#808080;"></div>
<div style="left:142px;top:536px;width:1752px;height:40px;background:#e4e4e4;"></div>
<div style="left:142px;top:536px;width:2px;height:38px;background:#808080;"></div>
<div style="left:142px;top:574px;width:1752px;height:2px;background:#fff;"></div>
<span class="t" style="left:148.0px;top:543px;color:#000;transform:scaleX(0.979);transform-origin:0 0;">10 items (1 selected)</span>
<div style="left:278px;top:590px;width:1752px;height:900px;background:#000;"></div>
<div style="left:280px;top:592px;width:1752px;height:900px;background:#f4f4f4;"></div>
<div style="left:282px;top:594px;width:1752px;height:900px;background:#e4e4e4;"></div>
<div style="left:281px;top:592px;width:1752px;height:44px;background:#b4b4b4;"></div>
<div style="left:281px;top:592px;width:1752px;height:1px;background:#c4c4c4;"></div>
<span class="t" style="left:288.3px;top:607px;color:#fff;transform:scaleX(0.835);transform-origin:0 0;">MPLS</span>
<div style="left:284px;top:690px;width:2px;height:800px;background:#fff;"></div>
<div style="left:286px;top:690px;width:1752px;height:2px;background:#fff;"></div>
<div style="left:292px;top:646px;width:152px;height:2px;background:#eaeaea;"></div>
<div style="left:292px;top:648px;width:152px;height:42px;background:#cccccc;"></div>
<div style="left:442px;top:646px;width:2px;height:44px;background:#a8a8a8;"></div>
<span class="t" style="left:302.6px;top:659px;color:#000;transform:scaleX(0.957);transform-origin:0 0;">LDP Instance</span>
<div style="left:444px;top:646px;width:158px;height:2px;background:#eaeaea;"></div>
<div style="left:444px;top:648px;width:158px;height:42px;background:#cccccc;"></div>
<div style="left:444px;top:648px;width:2px;height:42px;background:#eeeeee;"></div>
<span class="t" style="left:454.6px;top:659px;color:#000;transform:scaleX(0.969);transform-origin:0 0;">LDP Interface</span>
<div style="left:602px;top:640px;width:160px;height:52px;background:#e4e4e4;"></div>
<div style="left:602px;top:640px;width:158px;height:2px;background:#fff;"></div>
<div style="left:602px;top:640px;width:2px;height:52px;background:#fff;"></div>
<div style="left:760px;top:640px;width:2px;height:50px;background:#808080;"></div>
<span class="t" style="left:616.6px;top:655px;color:#000;transform:scaleX(0.929);transform-origin:0 0;">LDP Neighbor</span>
<div style="left:762px;top:646px;width:146px;height:2px;background:#eaeaea;"></div>
<div style="left:762px;top:648px;width:146px;height:42px;background:#cccccc;"></div>
<div style="left:906px;top:646px;width:2px;height:44px;background:#a8a8a8;"></div>
<span class="t" style="left:774.5px;top:659px;color:#000;transform:scaleX(0.949);transform-origin:0 0;">Accept Filter</span>
<div style="left:908px;top:646px;width:174px;height:2px;background:#eaeaea;"></div>
<div style="left:908px;top:648px;width:174px;height:42px;background:#cccccc;"></div>
<div style="left:1080px;top:646px;width:2px;height:44px;background:#a8a8a8;"></div>
<div style="left:908px;top:648px;width:2px;height:42px;background:#eeeeee;"></div>
<span class="t" style="left:920.5px;top:659px;color:#000;transform:scaleX(0.968);transform-origin:0 0;">Advertise Filter</span>
<div style="left:1082px;top:646px;width:162px;height:2px;background:#eaeaea;"></div>
<div style="left:1082px;top:648px;width:162px;height:42px;background:#cccccc;"></div>
<div style="left:1242px;top:646px;width:2px;height:44px;background:#a8a8a8;"></div>
<div style="left:1082px;top:648px;width:2px;height:42px;background:#eeeeee;"></div>
<span class="t" style="left:1092.6px;top:659px;color:#000;transform:scaleX(0.936);transform-origin:0 0;">Local Mapping</span>
<div style="left:1244px;top:646px;width:188px;height:2px;background:#eaeaea;"></div>
<div style="left:1244px;top:648px;width:188px;height:42px;background:#cccccc;"></div>
<div style="left:1430px;top:646px;width:2px;height:44px;background:#a8a8a8;"></div>
<div style="left:1244px;top:648px;width:2px;height:42px;background:#eeeeee;"></div>
<span class="t" style="left:1254.6px;top:659px;color:#000;transform:scaleX(0.955);transform-origin:0 0;">Remote Mapping</span>
<div style="left:1432px;top:646px;width:174px;height:2px;background:#eaeaea;"></div>
<div style="left:1432px;top:648px;width:174px;height:42px;background:#cccccc;"></div>
<div style="left:1604px;top:646px;width:2px;height:44px;background:#a8a8a8;"></div>
<div style="left:1432px;top:648px;width:2px;height:42px;background:#eeeeee;"></div>
<span class="t" style="left:1442.6px;top:659px;color:#000;transform:scaleX(0.950);transform-origin:0 0;">MPLS Interface</span>
<div style="left:288px;top:698px;width:40px;height:42px;border:2px solid #808080;background:#e4e4e4;box-shadow:0 2px 0 0 #fff,2px 0 0 0 #fff,2px 2px 0 0 #fff, inset 2px 2px 0 0 #fff;"></div>
<svg style="position:absolute;left:298px;top:710px" width="24" height="24" viewBox="0 0 24 24" shape-rendering="crispEdges"><path d="M8 0h8v8h8v8h-8v8h-8v-8h-8v-8h8z" fill="#000"/><path d="M10 2h4v8h8v4h-8v8h-4v-8h-8v-4h8z" fill="#0a28f0"/></svg>
<div style="left:338px;top:698px;width:40px;height:42px;border:2px solid #808080;background:#e4e4e4;box-shadow:0 2px 0 0 #fff,2px 0 0 0 #fff,2px 2px 0 0 #fff, inset 2px 2px 0 0 #fff;"></div>
<svg style="position:absolute;left:348px;top:718px" width="24" height="8" viewBox="0 0 24 8" shape-rendering="crispEdges"><rect width="24" height="8" fill="#000"/><rect x="2" y="2" width="20" height="4" fill="#e8301e"/></svg>
<div style="left:398px;top:698px;width:40px;height:42px;border:2px solid #808080;background:#e4e4e4;box-shadow:0 2px 0 0 #fff,2px 0 0 0 #fff,2px 2px 0 0 #fff, inset 2px 2px 0 0 #fff;"></div>
<svg style="position:absolute;left:408px;top:712px" width="24" height="20" viewBox="0 0 24 20" shape-rendering="crispEdges"><path d="M1 10 L7 17 L22 2" fill="none" stroke="#989898" stroke-width="7" stroke-linejoin="miter"/><path d="M1 10 L7 17 L22 2" fill="none" stroke="#fafafa" stroke-width="3" stroke-linejoin="miter"/></svg>
<div style="left:448px;top:698px;width:40px;height:42px;border:2px solid #808080;background:#e4e4e4;box-shadow:0 2px 0 0 #fff,2px 0 0 0 #fff,2px 2px 0 0 #fff, inset 2px 2px 0 0 #fff;"></div>
<svg style="position:absolute;left:458px;top:712px" width="22" height="22" viewBox="0 0 22 22" shape-rendering="crispEdges"><path d="M3 3L19 19M19 3L3 19" fill="none" stroke="#989898" stroke-width="7"/><path d="M3 3L19 19M19 3L3 19" fill="none" stroke="#fafafa" stroke-width="3"/></svg>
<div style="left:508px;top:698px;width:40px;height:42px;border:2px solid #808080;background:#e4e4e4;box-shadow:0 2px 0 0 #fff,2px 0 0 0 #fff,2px 2px 0 0 #fff, inset 2px 2px 0 0 #fff;"></div>
<svg style="position:absolute;left:516px;top:712px" width="26" height="20" viewBox="0 0 26 20" shape-rendering="crispEdges"><path d="M6 0h20v20h-26v-14h2v-2h2v-2h2z" fill="#a0a0a0"/><path d="M7 2h17v16h-22v-11h2v-2h2v-2h1z" fill="#f8f8f8"/><path d="M12 6h4M18 6h4M12 10h4M18 10h4" stroke="#a0a0a0" stroke-width="2"/></svg>
<div style="left:568px;top:698px;width:40px;height:42px;border:2px solid #808080;background:#e4e4e4;box-shadow:0 2px 0 0 #fff,2px 0 0 0 #fff,2px 2px 0 0 #fff, inset 2px 2px 0 0 #fff;"></div>
<svg style="position:absolute;left:578px;top:710px" width="24" height="26" viewBox="0 0 24 26" shape-rendering="crispEdges"><defs><linearGradient id="flg" x1="0" y1="0" x2="1" y2="0"><stop offset="0" stop-color="#e8ecf8"/><stop offset=".6" stop-color="#8090d0"/><stop offset="1" stop-color="#c0c8e8"/></linearGradient></defs><path d="M0 0h24v4h-2v2h-2v2h-2v2h-2v2h-1v14h-6v-14h-1v-2h-2v-2h-2v-2h-2v-2h-2z" fill="#000"/><path d="M3 2h18v2h-2v2h-2v2h-2v2h-2v2h-1v12h-2v-12h-1v-2h-2v-2h-2v-2h-2v-2h-2z" fill="url(#flg)"/></svg>
<div style="left:288px;top:750px;width:1752px;height:700px;background:#808080;"></div>
<div style="left:290px;top:752px;width:1752px;height:700px;background:#fff;"></div>
<div style="left:290px;top:752px;width:1752px;height:32px;background:#e4e4e4;"></div>
<div style="left:290px;top:784px;width:1752px;height:2px;background:#808080;"></div>
<div style="left:290px;top:752px;width:2000px;height:2px;background:#fff;"></div>
<div style="left:290px;top:752px;width:2px;height:32px;background:#fff;"></div>
<div style="left:338px;top:752px;width:2000px;height:2px;background:#fff;"></div>
<div style="left:338px;top:752px;width:2px;height:32px;background:#fff;"></div>
<div style="left:482px;top:752px;width:2000px;height:2px;background:#fff;"></div>
<div style="left:482px;top:752px;width:2px;height:32px;background:#fff;"></div>
<div style="left:662px;top:752px;width:2000px;height:2px;background:#fff;"></div>
<div style="left:662px;top:752px;width:2px;height:32px;background:#fff;"></div>
<div style="left:752px;top:752px;width:2000px;height:2px;background:#fff;"></div>
<div style="left:752px;top:752px;width:2px;height:32px;background:#fff;"></div>
<div style="left:992px;top:752px;width:2000px;height:2px;background:#fff;"></div>
<div style="left:992px;top:752px;width:2px;height:32px;background:#fff;"></div>
<div style="left:1172px;top:752px;width:2000px;height:2px;background:#fff;"></div>
<div style="left:1172px;top:752px;width:2px;height:32px;background:#fff;"></div>
<div style="left:1412px;top:752px;width:2000px;height:2px;background:#fff;"></div>
<div style="left:1412px;top:752px;width:2px;height:32px;background:#fff;"></div>
<div style="left:336px;top:752px;width:2px;height:32px;background:#808080;"></div>
<div style="left:480px;top:752px;width:2px;height:32px;background:#808080;"></div>
<div style="left:660px;top:752px;width:2px;height:32px;background:#808080;"></div>
<div style="left:750px;top:752px;width:2px;height:32px;background:#808080;"></div>
<div style="left:990px;top:752px;width:2px;height:32px;background:#808080;"></div>
<div style="left:1170px;top:752px;width:2px;height:32px;background:#808080;"></div>
<div style="left:1410px;top:752px;width:2px;height:32px;background:#808080;"></div>
<div style="left:290px;top:782px;width:46px;height:2px;background:#fff;"></div>
<div style="left:334px;top:752px;width:2px;height:32px;background:#fff;"></div>
<span class="t" style="left:304.2px;top:759px;color:#000;transform:scaleX(1.308);transform-origin:0 0;">#</span>
<span class="t" style="left:486.0px;top:759px;color:#000;transform-origin:0 0;">Transport</span>
<span class="t" style="left:665.0px;top:759px;color:#000;transform:scaleX(1.029);transform-origin:0 0;">Send ...</span>
<span class="t" style="left:754.1px;top:759px;color:#000;transform:scaleX(0.947);transform-origin:0 0;">Peer</span>
<span class="t" style="left:994.0px;top:759px;color:#000;transform:scaleX(0.976);transform-origin:0 0;">Local Transport</span>
<span class="t" style="left:1176.0px;top:759px;color:#000;transform:scaleX(0.943);transform-origin:0 0;">Addresses</span>
<div style="left:290px;top:786px;width:1752px;height:28px;background:#a6c2e8;"></div>
<div style="left:290px;top:814px;width:1752px;height:2px;background:#e4e0d8;"></div>
<div style="left:336px;top:786px;width:2px;height:30px;background:#e4e0d8;"></div>
<div style="left:480px;top:786px;width:2px;height:30px;background:#e4e0d8;"></div>
<div style="left:660px;top:786px;width:2px;height:30px;background:#e4e0d8;"></div>
<div style="left:750px;top:786px;width:2px;height:30px;background:#e4e0d8;"></div>
<div style="left:990px;top:786px;width:2px;height:30px;background:#e4e0d8;"></div>
<div style="left:1170px;top:786px;width:2px;height:30px;background:#e4e0d8;"></div>
<div style="left:1410px;top:786px;width:2px;height:30px;background:#e4e0d8;"></div>
<span class="t" style="right:1421.8px;top:789px;color:#000;transform:scaleX(0.981);transform-origin:100% 0;">0</span>
<span class="t" style="left:340.1px;top:789px;color:#000;transform:scaleX(0.962);transform-origin:0 0;">DOtvp</span>
<span class="t" style="left:485.0px;top:789px;color:#000;transform:scaleX(1.028);transform-origin:0 0;">10.255.255.2</span>
<span class="t" style="left:755.0px;top:789px;color:#000;transform:scaleX(1.036);transform-origin:0 0;">10.255.255.2:0</span>
<span class="t" style="left:995.0px;top:789px;color:#000;transform:scaleX(1.028);transform-origin:0 0;">10.255.255.1</span>
<span class="t" style="left:1174.9px;top:789px;color:#000;transform:scaleX(1.056);transform-origin:0 0;">10.255.255.2, 172.1...</span>
<div style="left:52px;top:888px;width:842px;height:526px;background:#000;"></div>
<div style="left:54px;top:890px;width:838px;height:522px;background:#a0a0a0;"></div>
<div style="left:54px;top:890px;width:836px;height:520px;background:#f4f4f4;"></div>
<div style="left:56px;top:892px;width:834px;height:518px;background:#e4e4e4;"></div>
<div style="left:55px;top:890px;width:836px;height:44px;background:#b4b4b4;"></div>
<span class="t" style="left:61.5px;top:905px;color:#fff;transform:scaleX(1.014);transform-origin:0 0;">LDP Instance &lt;10.255.255.1&gt;</span>
<div style="left:820px;top:898px;width:26px;height:26px;border:2px solid #808080;background:#e4e4e4;box-shadow:inset 2px 2px 0 0 #fff;"></div>
<div style="left:854px;top:898px;width:26px;height:26px;border:2px solid #808080;background:#e4e4e4;box-shadow:inset 2px 2px 0 0 #fff;"></div>
<svg style="position:absolute;left:826px;top:904px" width="18" height="18" viewBox="0 0 18 18" shape-rendering="crispEdges"><rect x="0" y="0" width="18" height="18" fill="#303030"/><rect x="2" y="4" width="14" height="12" fill="#e4e4e4"/></svg>
<svg style="position:absolute;left:862px;top:906px" width="14" height="13" viewBox="0 0 14 13" shape-rendering="crispEdges"><path d="M1 1L13 12M13 1L1 12" stroke="#303030" stroke-width="4"/></svg>
<span class="t" style="right:1470.1px;top:955px;color:#000;transform:scaleX(0.935);transform-origin:100% 0;">LSR ID:</span>
<span class="t" style="right:1469.7px;top:1001px;color:#000;transform:scaleX(0.975);transform-origin:100% 0;">Path Vector Limit:</span>
<span class="t" style="right:1470.1px;top:1047px;color:#000;transform:scaleX(0.949);transform-origin:100% 0;">Hop Limit:</span>
<span class="t" style="right:1470.3px;top:1093px;color:#000;transform-origin:100% 0;">Loop Detect:</span>
<span class="t" style="right:1470.1px;top:1139px;color:#000;transform:scaleX(0.945);transform-origin:100% 0;">Use Explicit Null:</span>
<span class="t" style="right:1470.1px;top:1185px;color:#000;transform:scaleX(0.982);transform-origin:100% 0;">Distribute For Default:</span>
<span class="t" style="right:1469.8px;top:1231px;color:#000;transform:scaleX(0.989);transform-origin:100% 0;">Transport Addresses:</span>
<span class="t" style="right:1470.1px;top:1277px;color:#000;transform:scaleX(0.878);transform-origin:100% 0;">VRF:</span>
<div style="left:292px;top:948px;width:346px;height:30px;border:2px solid #808080;background:#fff;box-shadow:0 2px 0 0 #fff,2px 0 0 0 #fff,2px 2px 0 0 #fff;"></div>
<span class="t" style="left:298.0px;top:955px;color:#000;transform:scaleX(1.028);transform-origin:0 0;">10.255.255.1</span>
<svg style="position:absolute;left:654px;top:960px" width="18" height="10" viewBox="0 0 18 10" shape-rendering="crispEdges"><path d="M9 0L18 10H0z" fill="#000"/></svg>
<div style="left:292px;top:994px;width:346px;height:30px;border:2px solid #808080;background:#e4e4e4;box-shadow:0 2px 0 0 #fff,2px 0 0 0 #fff,2px 2px 0 0 #fff;"></div>
<svg style="position:absolute;left:654px;top:1006px" width="18" height="10" viewBox="0 0 18 10" shape-rendering="crispEdges"><path d="M0 0H18L9 10z" fill="#000"/></svg>
<div style="left:292px;top:1040px;width:346px;height:30px;border:2px solid #808080;background:#e4e4e4;box-shadow:0 2px 0 0 #fff,2px 0 0 0 #fff,2px 2px 0 0 #fff;"></div>
<svg style="position:absolute;left:654px;top:1052px" width="18" height="10" viewBox="0 0 18 10" shape-rendering="crispEdges"><path d="M0 0H18L9 10z" fill="#000"/></svg>
<div style="left:292px;top:1086px;width:346px;height:30px;border:2px solid #808080;background:#e4e4e4;box-shadow:0 2px 0 0 #fff,2px 0 0 0 #fff,2px 2px 0 0 #fff;"></div>
<svg style="position:absolute;left:654px;top:1098px" width="18" height="10" viewBox="0 0 18 10" shape-rendering="crispEdges"><path d="M0 0H18L9 10z" fill="#000"/></svg>
<div style="left:292px;top:1132px;width:346px;height:30px;border:2px solid #808080;background:#e4e4e4;box-shadow:0 2px 0 0 #fff,2px 0 0 0 #fff,2px 2px 0 0 #fff;"></div>
<svg style="position:absolute;left:654px;top:1144px" width="18" height="10" viewBox="0 0 18 10" shape-rendering="crispEdges"><path d="M0 0H18L9 10z" fill="#000"/></svg>
<div style="left:292px;top:1178px;width:346px;height:30px;border:2px solid #808080;background:#e4e4e4;box-shadow:0 2px 0 0 #fff,2px 0 0 0 #fff,2px 2px 0 0 #fff;"></div>
<svg style="position:absolute;left:654px;top:1190px" width="18" height="10" viewBox="0 0 18 10" shape-rendering="crispEdges"><path d="M0 0H18L9 10z" fill="#000"/></svg>
<div style="left:292px;top:1224px;width:346px;height:30px;border:2px solid #808080;background:#fff;box-shadow:0 2px 0 0 #fff,2px 0 0 0 #fff,2px 2px 0 0 #fff;"></div>
<span class="t" style="left:298.0px;top:1231px;color:#000;transform:scaleX(1.028);transform-origin:0 0;">10.255.255.1</span>
<svg style="position:absolute;left:654px;top:1228px" width="18" height="24" viewBox="0 0 18 24" shape-rendering="crispEdges"><path d="M9 0L18 10H0z M0 14H18L9 24z" fill="#000"/></svg>
<div style="left:292px;top:1270px;width:310px;height:30px;border:2px solid #808080;background:#fff;box-shadow:0 2px 0 0 #fff,2px 0 0 0 #fff,2px 2px 0 0 #fff;"></div>
<span class="t" style="left:298.1px;top:1277px;color:#000;transform:scaleX(0.923);transform-origin:0 0;">main</span>
<div style="left:608px;top:1270px;width:30px;height:30px;border:2px solid #808080;background:#e4e4e4;box-shadow:inset 2px 2px 0 0 #fff,0 2px 0 0 #fff,2px 0 0 0 #fff,2px 2px 0 0 #fff;"></div>
<svg style="position:absolute;left:618px;top:1280px" width="14" height="16" viewBox="0 0 14 16" shape-rendering="crispEdges"><rect x="0" y="0" width="14" height="2" fill="#000"/><path d="M5 4h4v4h5l-7 8-7-8h5z" fill="#000"/></svg>
<svg style="position:absolute;left:654px;top:1282px" width="18" height="10" viewBox="0 0 18 10" shape-rendering="crispEdges"><path d="M9 0L18 10H0z" fill="#000"/></svg>
<span class="t" style="right:1469.8px;top:1323px;color:#1010f0;transform:scaleX(0.942);transform-origin:100% 0;">AFI:</span>
<div style="left:292px;top:1322px;width:20px;height:20px;border:2px solid #808080;background:#fff;box-shadow:0 2px 0 0 #fff,2px 0 0 0 #fff,2px 2px 0 0 #fff;"></div>
<svg style="position:absolute;left:296px;top:1328px" width="16" height="14" viewBox="0 0 16 14" shape-rendering="crispEdges"><path d="M2 6l5 5 8-9" fill="none" stroke="#000" stroke-width="4"/></svg>
<span class="t" style="left:322.1px;top:1323px;color:#000;transform:scaleX(0.934);transform-origin:0 0;">ip</span>
<div style="left:360px;top:1322px;width:20px;height:20px;border:2px solid #808080;background:#fff;box-shadow:0 2px 0 0 #fff,2px 0 0 0 #fff,2px 2px 0 0 #fff;"></div>
<span class="t" style="left:390.0px;top:1323px;color:#000;transform-origin:0 0;">ipv6</span>
<svg style="position:absolute;left:654px;top:1328px" width="18" height="10" viewBox="0 0 18 10" shape-rendering="crispEdges"><path d="M9 0L18 10H0z" fill="#000"/></svg>
<div style="left:710px;top:946px;width:160px;height:42px;border:2px solid #000;background:#e4e4e4;box-shadow:0 2px 0 0 #fff,2px 0 0 0 #fff,2px 2px 0 0 #fff;"></div>
<span class="t" style="left:778.9px;top:958px;color:#000;transform:scaleX(0.818);transform-origin:0 0;">OK</span>
<div style="left:710px;top:998px;width:160px;height:42px;border:2px solid #808080;background:#e4e4e4;box-shadow:0 2px 0 0 #fff,2px 0 0 0 #fff,2px 2px 0 0 #fff, inset 2px 2px 0 0 #fff;"></div>
<span class="t" style="left:760.8px;top:1010px;color:#000;transform:scaleX(0.905);transform-origin:0 0;">Cancel</span>
<div style="left:710px;top:1050px;width:160px;height:42px;border:2px solid #808080;background:#e4e4e4;box-shadow:0 2px 0 0 #fff,2px 0 0 0 #fff,2px 2px 0 0 #fff, inset 2px 2px 0 0 #fff;"></div>
<span class="t" style="left:766.0px;top:1062px;color:#000;transform:scaleX(0.945);transform-origin:0 0;">Apply</span>
<div style="left:710px;top:1112px;width:160px;height:42px;border:2px solid #808080;background:#e4e4e4;box-shadow:0 2px 0 0 #fff,2px 0 0 0 #fff,2px 2px 0 0 #fff, inset 2px 2px 0 0 #fff;"></div>
<span class="t" style="left:757.7px;top:1124px;color:#000;transform:scaleX(0.927);transform-origin:0 0;">Disable</span>
<div style="left:710px;top:1164px;width:160px;height:42px;border:2px solid #808080;background:#e4e4e4;box-shadow:0 2px 0 0 #fff,2px 0 0 0 #fff,2px 2px 0 0 #fff, inset 2px 2px 0 0 #fff;"></div>
<span class="t" style="left:747.7px;top:1176px;color:#000;transform:scaleX(0.923);transform-origin:0 0;">Comment</span>
<div style="left:710px;top:1216px;width:160px;height:42px;border:2px solid #808080;background:#e4e4e4;box-shadow:0 2px 0 0 #fff,2px 0 0 0 #fff,2px 2px 0 0 #fff, inset 2px 2px 0 0 #fff;"></div>
<span class="t" style="left:767.7px;top:1228px;color:#000;transform:scaleX(0.935);transform-origin:0 0;">Copy</span>
<div style="left:710px;top:1268px;width:160px;height:42px;border:2px solid #808080;background:#e4e4e4;box-shadow:0 2px 0 0 #fff,2px 0 0 0 #fff,2px 2px 0 0 #fff, inset 2px 2px 0 0 #fff;"></div>
<span class="t" style="left:752.5px;top:1280px;color:#000;transform:scaleX(0.952);transform-origin:0 0;">Remove</span>
<div style="left:58px;top:1366px;width:400px;height:32px;border-left:2px solid #808080;border-top:2px solid #808080;box-shadow:0 2px 0 0 #fff,2px 0 0 0 #fff,2px 2px 0 0 #fff;"></div>
<span class="t" style="left:62.5px;top:1375px;color:#000;transform:scaleX(0.971);transform-origin:0 0;">enabled</span>
<div style="left:468px;top:1366px;width:410px;height:32px;border-left:2px solid #808080;border-top:2px solid #808080;box-shadow:0 2px 0 0 #fff,2px 0 0 0 #fff,2px 2px 0 0 #fff;"></div>
<div style="left:956px;top:888px;width:760px;height:542px;background:#000;"></div>
<div style="left:958px;top:890px;width:756px;height:538px;background:#a0a0a0;"></div>
<div style="left:958px;top:890px;width:754px;height:536px;background:#f4f4f4;"></div>
<div style="left:960px;top:892px;width:752px;height:534px;background:#e4e4e4;"></div>
<div style="left:959px;top:890px;width:754px;height:44px;background:#5054c6;"></div>
<span class="t" style="left:965.5px;top:905px;color:#fff;transform-origin:0 0;">LDP Neighbor &lt;10.255.255.2&gt;</span>
<div style="left:1642px;top:898px;width:26px;height:26px;border:2px solid #808080;background:#e4e4e4;box-shadow:inset 2px 2px 0 0 #fff;"></div>
<div style="left:1676px;top:898px;width:26px;height:26px;border:2px solid #808080;background:#e4e4e4;box-shadow:inset 2px 2px 0 0 #fff;"></div>
<svg style="position:absolute;left:1648px;top:904px" width="18" height="18" viewBox="0 0 18 18" shape-rendering="crispEdges"><rect x="0" y="0" width="18" height="18" fill="#303030"/><rect x="2" y="4" width="14" height="12" fill="#e4e4e4"/></svg>
<svg style="position:absolute;left:1684px;top:906px" width="14" height="13" viewBox="0 0 14 13" shape-rendering="crispEdges"><path d="M1 1L13 12M13 1L1 12" stroke="#303030" stroke-width="4"/></svg>
<span class="t" style="right:611.0px;top:955px;color:#000;transform:scaleX(1.026);transform-origin:100% 0;">Transport:</span>
<div style="left:1150px;top:948px;width:346px;height:30px;border:2px solid #808080;background:#e4e4e4;box-shadow:0 2px 0 0 #fff,2px 0 0 0 #fff,2px 2px 0 0 #fff;"></div>
<span class="t" style="left:1156.0px;top:955px;color:#000;transform:scaleX(1.028);transform-origin:0 0;">10.255.255.2</span>
<span class="t" style="right:611.7px;top:1001px;color:#000;transform-origin:100% 0;">Send Targeted:</span>
<div style="left:1150px;top:994px;width:346px;height:30px;border:2px solid #808080;background:#e4e4e4;box-shadow:0 2px 0 0 #fff,2px 0 0 0 #fff,2px 2px 0 0 #fff;"></div>
<span class="t" style="right:611.0px;top:1047px;color:#000;transform:scaleX(0.989);transform-origin:100% 0;">Peer:</span>
<div style="left:1150px;top:1040px;width:346px;height:30px;border:2px solid #808080;background:#e4e4e4;box-shadow:0 2px 0 0 #fff,2px 0 0 0 #fff,2px 2px 0 0 #fff;"></div>
<span class="t" style="left:1156.0px;top:1047px;color:#000;transform:scaleX(1.036);transform-origin:0 0;">10.255.255.2:0</span>
<span class="t" style="right:611.8px;top:1093px;color:#000;transform:scaleX(0.989);transform-origin:100% 0;">Local Transport:</span>
<div style="left:1150px;top:1086px;width:346px;height:30px;border:2px solid #808080;background:#e4e4e4;box-shadow:0 2px 0 0 #fff,2px 0 0 0 #fff,2px 2px 0 0 #fff;"></div>
<span class="t" style="left:1156.0px;top:1093px;color:#000;transform:scaleX(1.028);transform-origin:0 0;">10.255.255.1</span>
<span class="t" style="right:611.5px;top:1139px;color:#000;transform:scaleX(0.963);transform-origin:100% 0;">Addresses:</span>
<div style="left:1150px;top:1132px;width:346px;height:30px;border:2px solid #808080;background:#e4e4e4;box-shadow:0 2px 0 0 #fff,2px 0 0 0 #fff,2px 2px 0 0 #fff;"></div>
<span class="t" style="left:1156.0px;top:1139px;color:#000;transform:scaleX(1.028);transform-origin:0 0;">10.255.255.2</span>
<div style="left:1150px;top:1176px;width:346px;height:30px;border:2px solid #808080;background:#e4e4e4;box-shadow:0 2px 0 0 #fff,2px 0 0 0 #fff,2px 2px 0 0 #fff;"></div>
<span class="t" style="left:1156.0px;top:1183px;color:#000;transform:scaleX(1.039);transform-origin:0 0;">172.16.0.2</span>
<span class="t" style="right:611.2px;top:1245px;color:#000;transform:scaleX(0.975);transform-origin:100% 0;">Path Vector Limit:</span>
<div style="left:1150px;top:1238px;width:346px;height:30px;border:2px solid #808080;background:#e4e4e4;box-shadow:0 2px 0 0 #fff,2px 0 0 0 #fff,2px 2px 0 0 #fff;"></div>
<span class="t" style="left:1156.0px;top:1245px;color:#000;transform:scaleX(0.981);transform-origin:0 0;">0</span>
<span class="t" style="right:611.0px;top:1337px;color:#000;transform:scaleX(0.953);transform-origin:100% 0;">Used AFI:</span>
<div style="left:1150px;top:1330px;width:346px;height:30px;border:2px solid #808080;background:#e4e4e4;box-shadow:0 2px 0 0 #fff,2px 0 0 0 #fff,2px 2px 0 0 #fff;"></div>
<span class="t" style="left:1156.1px;top:1337px;color:#000;transform:scaleX(0.934);transform-origin:0 0;">ip</span>
<div style="left:974px;top:1222px;width:526px;height:2px;background:#f0f0f0;"></div>
<div style="left:974px;top:1224px;width:526px;height:2px;background:#a0a0a0;"></div>
<div style="left:1150px;top:1290px;width:20px;height:20px;border:2px solid #808080;background:#e4e4e4;box-shadow:0 2px 0 0 #fff,2px 0 0 0 #fff,2px 2px 0 0 #fff;"></div>
<span class="t" style="left:1180.1px;top:1291px;color:#000;transform:scaleX(0.927);transform-origin:0 0;">On Demand</span>
<div style="left:1532px;top:946px;width:160px;height:42px;border:2px solid #000;background:#e4e4e4;box-shadow:0 2px 0 0 #fff,2px 0 0 0 #fff,2px 2px 0 0 #fff;"></div>
<div style="left:1536px;top:950px;width:152px;height:34px;border:2px dotted #000;"></div>
<span class="t" style="left:1600.9px;top:958px;color:#000;transform:scaleX(0.818);transform-origin:0 0;">OK</span>
<div style="left:1532px;top:1008px;width:160px;height:42px;border:2px solid #808080;background:#e4e4e4;box-shadow:0 2px 0 0 #fff,2px 0 0 0 #fff,2px 2px 0 0 #fff, inset 2px 2px 0 0 #fff;"></div>
<span class="t" style="left:1589.7px;top:1020px;color:#000;transform:scaleX(0.935);transform-origin:0 0;">Copy</span>
<div style="left:1532px;top:1060px;width:160px;height:42px;border:2px solid #808080;background:#e4e4e4;box-shadow:0 2px 0 0 #fff,2px 0 0 0 #fff,2px 2px 0 0 #fff, inset 2px 2px 0 0 #fff;"></div>
<span class="t" style="left:1574.5px;top:1072px;color:#000;transform:scaleX(0.952);transform-origin:0 0;">Remove</span>
<div style="left:962px;top:1382px;width:82px;height:34px;border-left:2px solid #808080;border-top:2px solid #808080;box-shadow:0 2px 0 0 #fff,2px 0 0 0 #fff,2px 2px 0 0 #fff;"></div>
<span class="t" style="left:966.5px;top:1391px;color:#000;transform:scaleX(0.952);transform-origin:0 0;">dynamic</span>
<div style="left:1054px;top:1382px;width:82px;height:34px;border-left:2px solid #808080;border-top:2px solid #808080;box-shadow:0 2px 0 0 #fff,2px 0 0 0 #fff,2px 2px 0 0 #fff;"></div>
<div style="left:1146px;top:1382px;width:82px;height:34px;border-left:2px solid #808080;border-top:2px solid #808080;box-shadow:0 2px 0 0 #fff,2px 0 0 0 #fff,2px 2px 0 0 #fff;"></div>
<span class="t" style="left:1150.5px;top:1391px;color:#000;transform:scaleX(0.971);transform-origin:0 0;">enabled</span>
<div style="left:1238px;top:1382px;width:82px;height:34px;border-left:2px solid #808080;border-top:2px solid #808080;box-shadow:0 2px 0 0 #fff,2px 0 0 0 #fff,2px 2px 0 0 #fff;"></div>
<span class="t" style="left:1242.4px;top:1391px;color:#000;transform:scaleX(1.072);transform-origin:0 0;">opera...</span>
<div style="left:1330px;top:1382px;width:82px;height:34px;border-left:2px solid #808080;border-top:2px solid #808080;box-shadow:0 2px 0 0 #fff,2px 0 0 0 #fff,2px 2px 0 0 #fff;"></div>
<span class="t" style="left:1334.5px;top:1391px;color:#000;transform:scaleX(1.043);transform-origin:0 0;">sendi...</span>
<div style="left:1422px;top:1382px;width:82px;height:34px;border-left:2px solid #808080;border-top:2px solid #808080;box-shadow:0 2px 0 0 #fff,2px 0 0 0 #fff,2px 2px 0 0 #fff;"></div>
<span class="t" style="left:1427.5px;top:1391px;color:#000;transform:scaleX(0.818);transform-origin:0 0;">VPLS</span>
<div style="left:1514px;top:1382px;width:82px;height:34px;border-left:2px solid #808080;border-top:2px solid #808080;box-shadow:0 2px 0 0 #fff,2px 0 0 0 #fff,2px 2px 0 0 #fff;"></div>
<span class="t" style="left:1518.5px;top:1391px;color:#000;transform:scaleX(0.965);transform-origin:0 0;">passive</span>
<div style="left:1606px;top:1382px;width:94px;height:34px;border-left:2px solid #808080;border-top:2px solid #808080;box-shadow:0 2px 0 0 #fff,2px 0 0 0 #fff,2px 2px 0 0 #fff;"></div>
<span class="t" style="left:1610.4px;top:1391px;color:#a8a8a8;transform:scaleX(1.063);transform-origin:0 0;">on de...</span>
</body></html>
